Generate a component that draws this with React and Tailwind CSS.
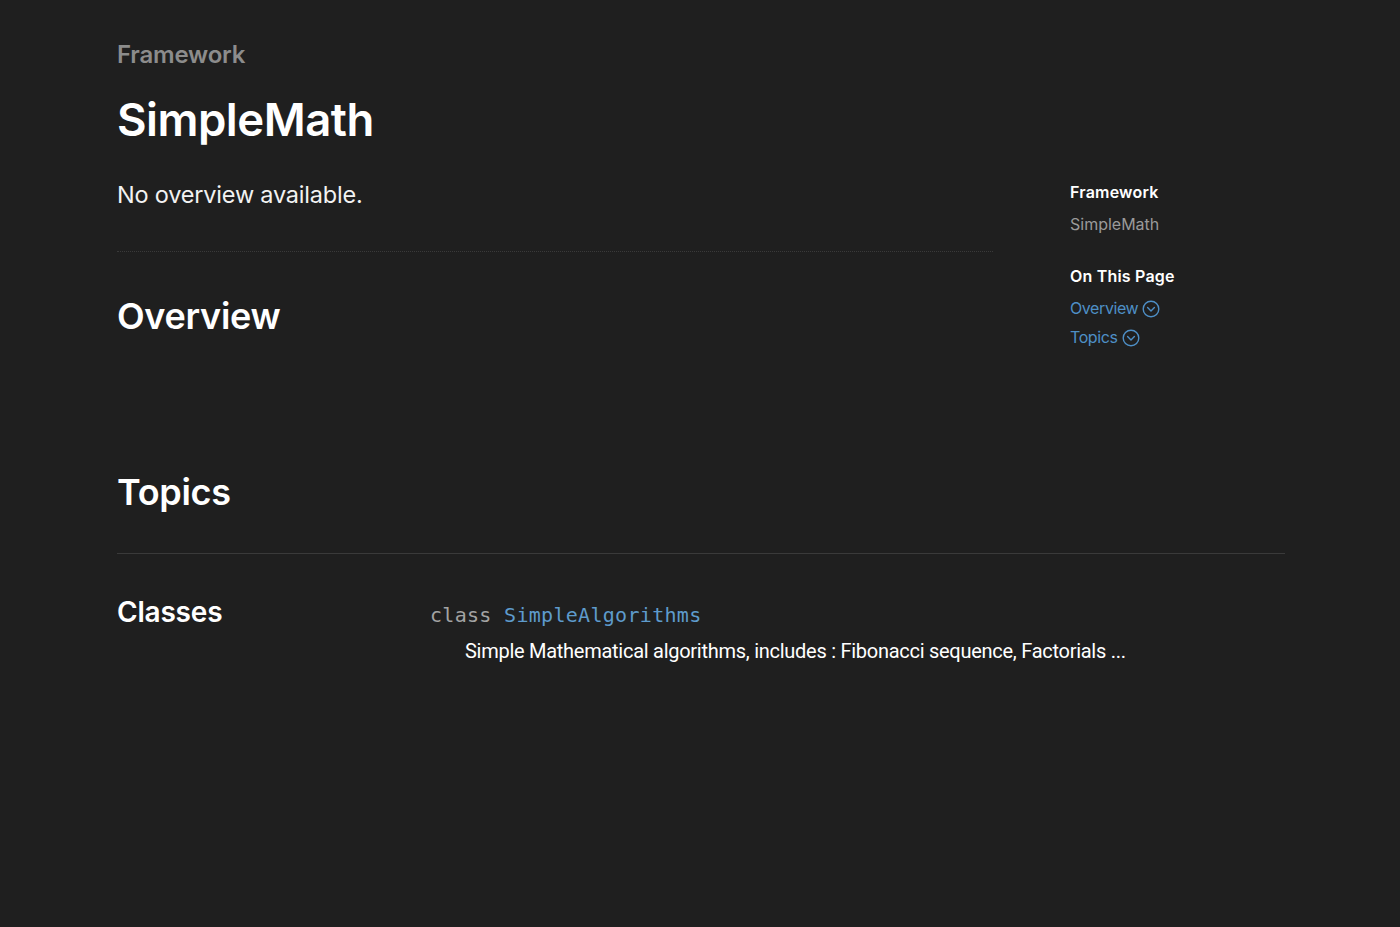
import React from "react";

function CircleChevron() {
  return (
    <svg width="18" height="18" viewBox="0 0 18 18" fill="none" className="ml-[4px] mt-[1px]">
      <circle cx="9" cy="9" r="7.8" stroke="currentColor" strokeWidth="1.4" />
      <path d="M5.6 7.6 L9 11 L12.4 7.6" stroke="currentColor" strokeWidth="1.4" strokeLinecap="round" strokeLinejoin="round" />
    </svg>
  );
}

export default function App() {
  return (
    <div className="min-h-[927px] w-full bg-[#1f1f1f] text-white" style={{ fontFamily: "Inter, 'Noto Sans', sans-serif" }}>
      <div className="pl-[117px] pr-[115px]">
        <div className="flex items-start">
          <div className="w-[876px] pb-[128px]">
            <div className="pt-[38px] text-[24px] leading-[34px] font-semibold text-[#8c8c8c] tracking-[-0.2px]">Framework</div>
            <h1 className="mt-[20px] text-[45.5px] leading-[56px] font-semibold tracking-[-0.5px]">SimpleMath</h1>
            <p className="mt-[30px] text-[23.5px] leading-[34px] font-normal text-[#f2f2f2] tracking-[-0.2px]">No overview available.</p>
            <div className="mt-[39px] border-t border-dotted border-[#3a3a3a]"></div>
            <h2 className="mt-[40px] text-[36px] leading-[48px] font-semibold tracking-[-0.3px]">Overview</h2>
          </div>
          <div className="ml-[77px] pt-[180px]">
            <div className="text-[16px] leading-[24px] font-semibold tracking-[0.2px]">Framework</div>
            <div className="mt-[8px] text-[16px] leading-[24px] text-[#9a9a9a]">SimpleMath</div>
            <div className="mt-[28px] text-[16px] leading-[24px] font-semibold tracking-[0.2px]">On This Page</div>
            <div className="mt-[8px] flex items-center text-[16px] leading-[24px] tracking-[-0.4px] text-[#4e8fc6]">Overview<CircleChevron /></div>
            <div className="mt-[5px] flex items-center text-[16px] leading-[24px] tracking-[-0.4px] text-[#4e8fc6]">Topics<CircleChevron /></div>
          </div>
        </div>
        <h2 className="text-[36px] leading-[48px] font-semibold tracking-[-0.3px]">Topics</h2>
        <div className="mt-[37px] border-t border-[#3a3a3a]"></div>
        <div className="mt-[40px] flex">
          <div className="w-[313px] text-[28px] leading-[36px] font-semibold tracking-[-0.2px]">Classes</div>
          <div className="pt-[7px]">
            <div className="text-[20px] leading-[28px] tracking-[0.3px]" style={{ fontFamily: "'DejaVu Sans Mono', 'Liberation Mono', monospace" }}>
              <span className="text-[#a3a3a3]">class </span>
              <span className="text-[#5e9bcc]">SimpleAlgorithms</span>
            </div>
            <div className="mt-[8px] ml-[35px] text-[20px] leading-[28px] text-white tracking-[-0.27px]" style={{ fontFamily: "Roboto, 'Noto Sans', sans-serif" }}>
              Simple Mathematical algorithms, includes : Fibonacci sequence, Factorials ...
            </div>
          </div>
        </div>
      </div>
    </div>
  );
}
